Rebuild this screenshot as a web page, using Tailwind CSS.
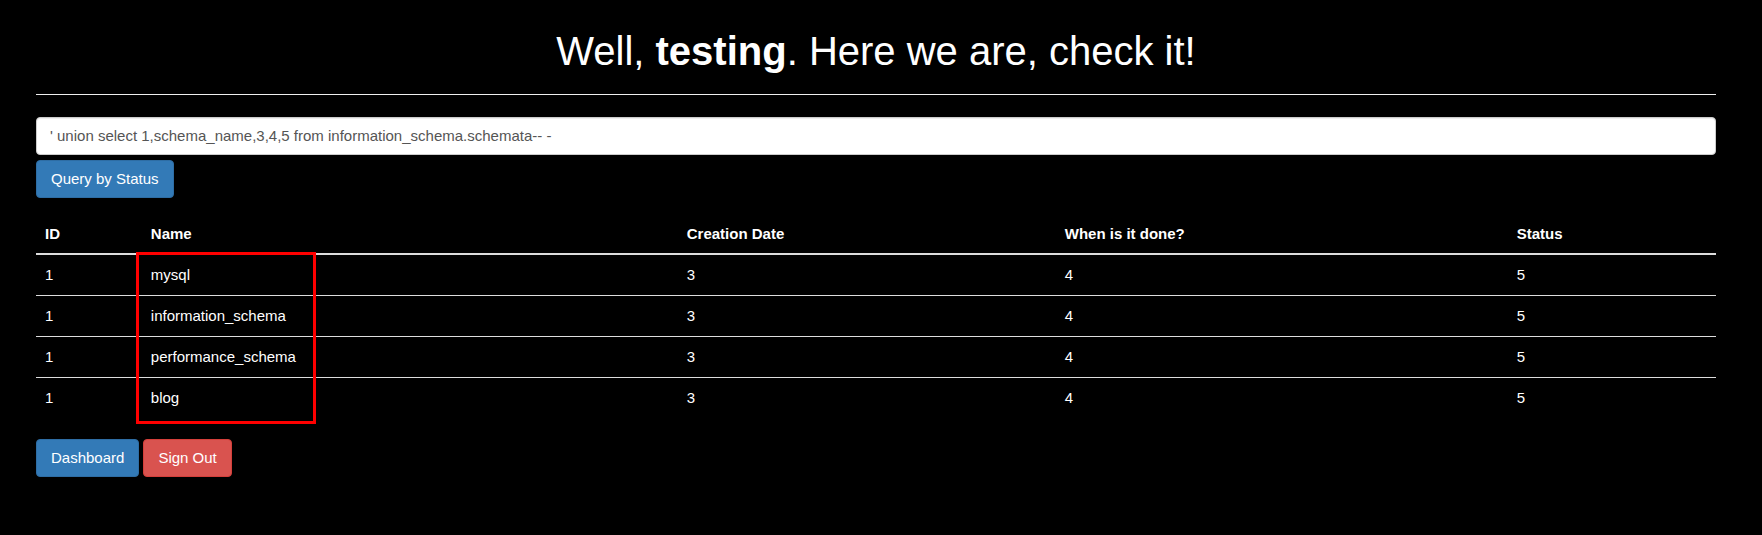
<!DOCTYPE html>
<html lang="en">
<head>
<meta charset="utf-8">
<title>Dashboard</title>
<script src="https://cdn.jsdelivr.net/npm/@tailwindcss/browser@4"></script>
</head>
<body class="bg-black text-white font-['Liberation_Sans',Arial,sans-serif] text-[15px] leading-[22px]">
<main class="pl-9 pr-[46px] pt-[29px] pb-12">
  <h1 class="text-center text-[40px] leading-[44px]">Well, <b>testing</b>. Here we are, check it!</h1>
  <hr class="mt-[21px] mb-[22px] border-t border-[#eeeeee]">
  <form onsubmit="return false">
    <input type="text" aria-label="Query" value="' union select 1,schema_name,3,4,5 from information_schema.schemata-- -" class="block w-full h-[38px] px-[13px] pb-0.5 rounded border border-[#cccccc] bg-white text-[#555555] shadow-[inset_0_1px_1px_rgba(0,0,0,0.075)]">
    <button type="submit" class="mt-[5px] block h-[38px] px-[14px] rounded border border-[#2e6da4] bg-[#337ab7]">Query by Status</button>
  </form>
  <div class="relative mt-[17px]">
    <table class="w-full table-fixed border-collapse text-left">
      <colgroup><col class="w-[6.3%]"><col class="w-[31.9%]"><col class="w-[22.5%]"><col class="w-[26.9%]"><col></colgroup>
      <thead class="border-b-2 border-[#dddddd]">
        <tr><th class="px-[9px] py-2">ID</th><th class="px-[9px] py-2">Name</th><th class="px-[9px] py-2">Creation Date</th><th class="px-[9px] py-2">When is it done?</th><th class="px-[9px] py-2">Status</th></tr>
      </thead>
      <tbody class="divide-y divide-[#dddddd]">
        <tr><td class="px-[9px] py-[9px]">1</td><td class="px-[9px] py-[9px]">mysql</td><td class="px-[9px] py-[9px]">3</td><td class="px-[9px] py-[9px]">4</td><td class="px-[9px] py-[9px]">5</td></tr>
        <tr><td class="px-[9px] py-[9px]">1</td><td class="px-[9px] py-[9px]">information_schema</td><td class="px-[9px] py-[9px]">3</td><td class="px-[9px] py-[9px]">4</td><td class="px-[9px] py-[9px]">5</td></tr>
        <tr><td class="px-[9px] py-[9px]">1</td><td class="px-[9px] py-[9px]">performance_schema</td><td class="px-[9px] py-[9px]">3</td><td class="px-[9px] py-[9px]">4</td><td class="px-[9px] py-[9px]">5</td></tr>
        <tr><td class="px-[9px] py-[9px]">1</td><td class="px-[9px] py-[9px]">blog</td><td class="px-[9px] py-[9px]">3</td><td class="px-[9px] py-[9px]">4</td><td class="px-[9px] py-[9px]">5</td></tr>
      </tbody>
    </table>
    <div class="pointer-events-none absolute top-[37px] -bottom-[6px] left-[100px] w-[180px] border-3 border-[#ff0000]"></div>
  </div>
  <nav class="mt-[21px] flex gap-1">
    <a href="#dashboard" class="rounded border border-[#2e6da4] bg-[#337ab7] px-[14px] py-[7px]">Dashboard</a>
    <a href="#signout" class="rounded border border-[#d43f3a] bg-[#d9534f] px-[14px] py-[7px]">Sign Out</a>
  </nav>
</main>
</body>
</html>
